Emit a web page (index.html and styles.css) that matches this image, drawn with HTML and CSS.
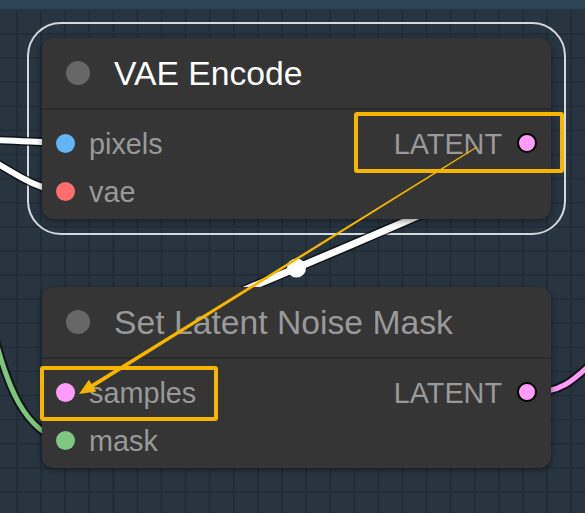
FILE: index.html
```html
<!DOCTYPE html>
<html>
<head>
<meta charset="utf-8">
<link rel="stylesheet" href="styles.css">
</head>
<body>
<div class="canvas">
  <div class="group"></div>
  <svg class="layer links" width="585" height="513" viewBox="0 0 585 513">
    <g class="wire-shadow">
      <path d="M -10 140 C 20 140, 40 143, 66 143"/>
      <path d="M -10 159 C 20 177, 40 191, 66 191"/>
      <path d="M -6 335 C 8 385, 22 430, 66 443"/>
      <path d="M 527 393 C 560 393, 572 383, 600 355"/>
      <path class="thick" d="M 527 143 C 658 143, -65 393, 66 393"/>
    </g>
    <path class="wire white" d="M -10 140 C 20 140, 40 143, 66 143"/>
    <path class="wire white" d="M -10 159 C 20 177, 40 191, 66 191"/>
    <path class="wire green" d="M -6 335 C 8 385, 22 430, 66 443"/>
    <path class="wire pink" d="M 527 393 C 560 393, 572 383, 600 355"/>
    <path class="wire white thick" d="M 527 143 C 658 143, -65 393, 66 393"/>
    <circle class="mid" cx="296.5" cy="268" r="9.5"/>
  </svg>

  <div class="node node-vae">
    <div class="node-title">
      <span class="title-dot"></span>
      <span class="title-text selected">VAE Encode</span>
    </div>
    <div class="node-body">
      <div class="slots">
        <div class="slot"><span class="dot image"></span><span class="label">pixels</span></div>
        <div class="slot"><span class="dot vae"></span><span class="label">vae</span></div>
      </div>
      <div class="slots">
        <div class="slot out"><span class="label">LATENT</span><span class="dot latent ring"></span></div>
      </div>
    </div>
  </div>

  <div class="node node-mask">
    <div class="node-title">
      <span class="title-dot"></span>
      <span class="title-text">Set Latent Noise Mask</span>
    </div>
    <div class="node-body">
      <div class="slots">
        <div class="slot"><span class="dot latent"></span><span class="label">samples</span></div>
        <div class="slot"><span class="dot mask"></span><span class="label">mask</span></div>
      </div>
      <div class="slots">
        <div class="slot out"><span class="label">LATENT</span><span class="dot latent ring"></span></div>
      </div>
    </div>
  </div>

  <div class="hl hl-out"></div>
  <div class="hl hl-in"></div>

  <svg class="layer arrow" width="585" height="513" viewBox="0 0 585 513">
    <polygon points="476.7,146.6 477.3,147.4 93.7,387.3 96.3,391.5 79,394 88.9,379.7 91.5,383.9"/>
  </svg>
</div>
</body>
</html>
```

FILE: styles.css
```css
html, body {
  margin: 0;
  padding: 0;
  background: #273440;
}

.canvas {
  position: relative;
  width: 585px;
  height: 513px;
  overflow: hidden;
  font-family: "Liberation Sans", Arial, sans-serif;
  background-color: #283541;
  background-image:
    linear-gradient(to bottom, #2d4357 0, #2d4357 8px, rgba(45,67,87,0) 11px),
    linear-gradient(to bottom, #222c37 2px, transparent 2px),
    linear-gradient(to right, #222c37 2px, transparent 2px);
  background-size: 100% 100%, 24.1px 24.1px, 24.1px 24.1px;
  background-position: 0 0, 0 9px, 16px 0;
}

.layer {
  position: absolute;
  left: 0;
  top: 0;
}

.group {
  position: absolute;
  left: 27px;
  top: 22px;
  width: 535px;
  height: 209px;
  border: 2px solid #d3d8dd;
  border-radius: 34px;
}

.wire-shadow path {
  fill: none;
  stroke: rgba(10, 10, 10, 0.75);
  stroke-width: 9;
}

.wire-shadow path.thick {
  stroke-width: 10;
}

.wire {
  fill: none;
  stroke-width: 6;
}

.wire.thick {
  stroke-width: 7;
}

.wire.white { stroke: #ffffff; }
.wire.green { stroke: #7ec47f; stroke-width: 5; }
.wire.pink { stroke: #ff9cf9; stroke-width: 5; }

.mid {
  fill: #ffffff;
}

.node {
  position: absolute;
  left: 42px;
  width: 509px;
  height: 181px;
  background: #353535;
  border-radius: 12px;
  box-shadow: 0 2px 6px rgba(0, 0, 0, 0.45);
  display: flex;
  flex-direction: column;
}

.node-vae { top: 38px; }
.node-mask { top: 287px; }

.node-title {
  height: 70px;
  border-bottom: 2px solid #2a2a2a;
  display: flex;
  align-items: center;
  padding-left: 24px;
  gap: 24px;
}

.title-dot {
  width: 24px;
  height: 24px;
  border-radius: 50%;
  background: #676767;
  flex: none;
}

.title-text {
  font-size: 33.7px;
  color: #999999;
  white-space: nowrap;
}

.title-text.selected {
  color: #ffffff;
}

.node-body {
  display: flex;
  justify-content: space-between;
  padding-top: 9px;
}

.slots {
  display: flex;
  flex-direction: column;
}

.slot {
  height: 48px;
  display: flex;
  align-items: center;
  gap: 14px;
  padding-left: 14px;
}

.slot.out {
  padding-left: 0;
  padding-right: 14px;
  gap: 15px;
}

.label {
  font-size: 28.8px;
  color: #999999;
  white-space: nowrap;
  padding-top: 3px;
}

.dot {
  width: 19px;
  height: 19px;
  border-radius: 50%;
  flex: none;
  box-sizing: border-box;
}

.dot.image { background: #64b5f6; }
.dot.vae { background: #ff6e6e; }
.dot.latent { background: #ff9cf9; }
.dot.mask { background: #81c784; }

.dot.ring {
  width: 20px;
  height: 20px;
  border: 2px solid #000000;
}

.hl {
  position: absolute;
  border: 4px solid #f6b500;
  border-radius: 3px;
  box-sizing: border-box;
}

.hl-out {
  left: 354px;
  top: 112px;
  width: 210px;
  height: 61px;
}

.hl-in {
  left: 40px;
  top: 366px;
  width: 178px;
  height: 55px;
}

.arrow polygon {
  fill: #f6b500;
}
```
